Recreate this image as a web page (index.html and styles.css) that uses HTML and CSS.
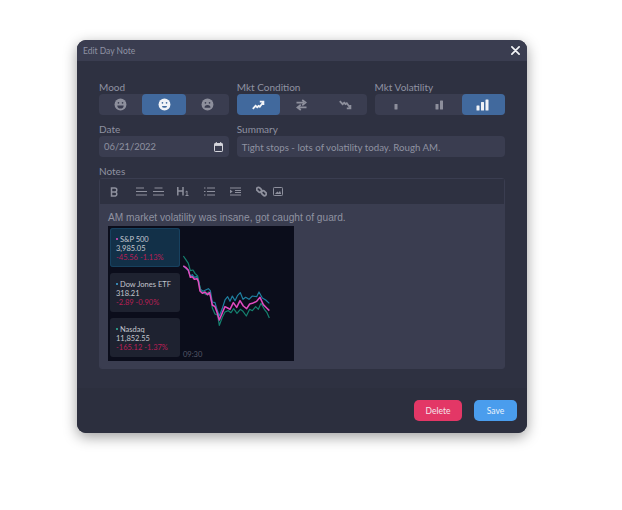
FILE: index.html
```html
<!DOCTYPE html>
<html lang="en">
<head>
<meta charset="utf-8">
<title>Edit Day Note</title>
<link rel="stylesheet" href="styles.css">
</head>
<body>
<svg class="defs" width="0" height="0" aria-hidden="true">
  <symbol id="face-happy" viewBox="0 0 14 14"><circle cx="7" cy="7" r="6.4" fill="currentColor"/><circle cx="4.8" cy="5.2" r=".9" class="cut"/><circle cx="9.2" cy="5.2" r=".9" class="cut"/><path d="M3.600 8h6.800a3.400 3.400 0 0 1-6.800 0z" class="cut"/></symbol>
  <symbol id="face-neutral" viewBox="0 0 14 14"><circle cx="7" cy="7" r="6.4" fill="currentColor"/><circle cx="4.8" cy="5.200" r=".9" class="cut"/><circle cx="9.200" cy="5.200" r=".9" class="cut"/><path d="M4.300 8.500h5.400a2.700 2 0 0 1-5.400 0z" class="cut"/></symbol>
  <symbol id="face-sad" viewBox="0 0 14 14"><circle cx="7" cy="7" r="6.4" fill="currentColor"/><circle cx="4.800" cy="5.200" r=".9" class="cut"/><circle cx="9.200" cy="5.200" r=".9" class="cut"/><path d="M3.800 10.600a3.200 3 0 0 1 6.400 0z" class="cut"/></symbol>
</svg>
<main class="modal">
  <header class="modal-head">
    <span class="modal-title">Edit Day Note</span>
    <svg class="close" viewBox="0 0 10 10" width="9" height="9"><path d="M1 1l8 8M9 1l-8 8" fill="none" stroke="currentColor" stroke-width="1.900" stroke-linecap="round"/></svg>
  </header>
  <section class="modal-body">
    <div class="row-three">
      <div class="field">
        <label class="label">Mood</label>
        <div class="segments">
          <button class="seg"><svg width="13" height="13"><use href="#face-happy"/></svg></button>
          <button class="seg active"><svg width="13" height="13"><use href="#face-neutral"/></svg></button>
          <button class="seg"><svg width="13" height="13"><use href="#face-sad"/></svg></button>
        </div>
      </div>
      <div class="field">
        <label class="label">Mkt Condition</label>
        <div class="segments">
          <button class="seg active"><svg width="13" height="10" viewBox="0 0 13 10"><path d="M.8 8.800l2.800-3 1.600 1.400 1.400-1.200 1.200.8 3-4M7.800 1.600h3.600v3.400" fill="none" stroke="currentColor" stroke-width="1.800"/></svg></button>
          <button class="seg"><svg width="11" height="12" viewBox="0 0 11 12"><path d="M.5 3.600h7.500M6.200 1l3.400 2.600-3.400 2.600M10.500 8.400H3M4.800 5.800L1.400 8.400l3.400 2.600" fill="none" stroke="currentColor" stroke-width="1.700"/></svg></button>
          <button class="seg"><svg width="13" height="10" viewBox="0 0 13 10"><path d="M.8 1.200l2.800 3 1.600-1.400 1.400 1.200 1.200-.8 3 4M7.800 8.400h3.600V5" fill="none" stroke="currentColor" stroke-width="1.800"/></svg></button>
        </div>
      </div>
      <div class="field">
        <label class="label">Mkt Volatility</label>
        <div class="segments">
          <button class="seg"><svg width="12" height="11" viewBox="0 0 12 11"><rect x="4.500" y="5" width="3" height="5.500" rx=".5" fill="currentColor"/></svg></button>
          <button class="seg"><svg width="12" height="11" viewBox="0 0 12 11"><rect x="1.500" y="5" width="3" height="5.500" rx=".5" fill="currentColor"/><rect x="6" y="1.500" width="3" height="9" rx=".5" fill="currentColor"/></svg></button>
          <button class="seg active"><svg width="14" height="12" viewBox="0 0 14 12"><rect x=".5" y="6.500" width="3" height="5" rx=".5" fill="currentColor"/><rect x="5" y="3" width="3" height="8.500" rx=".5" fill="currentColor"/><rect x="9.500" y=".5" width="3" height="11" rx=".5" fill="currentColor"/></svg></button>
        </div>
      </div>
    </div>
    <div class="row-three">
      <div class="field">
        <label class="label">Date</label>
        <div class="input date-input">
          <span>06/21/2022</span>
          <svg width="9" height="10" viewBox="0 0 9 10"><path d="M1.200 1.500h6.600a.7.7 0 0 1 .7.700v6.600a.7.7 0 0 1-.7.700H1.200a.7.7 0 0 1-.7-.7V2.200a.7.7 0 0 1 .7-.7z" fill="none" stroke="currentColor"/><rect x=".5" y="1.500" width="8" height="2.400" fill="currentColor"/><path d="M2.300 0v2M6.700 0v2" stroke="currentColor"/></svg>
        </div>
      </div>
      <div class="field span-two">
        <label class="label">Summary</label>
        <div class="input">Tight stops - lots of volatility today. Rough AM.</div>
      </div>
    </div>
    <div class="field">
      <label class="label">Notes</label>
      <div class="editor">
        <div class="toolbar">
          <span class="tool tool-b"><svg width="9" height="10" viewBox="0 0 9 10"><path d="M1.500 1h3.300a2 2 0 0 1 0 4H1.500zM1.500 5h3.900a2.100 2.100 0 0 1 0 4H1.500z" fill="none" stroke="currentColor" stroke-width="1.500"/></svg></span>
          <span class="tool tool-a1"><svg width="11" height="9" viewBox="0 0 11 9"><path d="M0 1h8M0 4.500h11M0 8h11" fill="none" stroke="currentColor"/></svg></span>
          <span class="tool tool-a2"><svg width="11" height="9" viewBox="0 0 11 9"><path d="M1.500 1h8M0 4.500h11M0 8h11" fill="none" stroke="currentColor"/></svg></span>
          <span class="tool tool-h"><svg width="12" height="9" viewBox="0 0 12 9"><path d="M.8 0v8.500M6 0v8.500M.8 4H6" fill="none" stroke="currentColor" stroke-width="1.500"/><path d="M8.500 5l1.500-1v4.500M8.500 8.500h3" fill="none" stroke="currentColor"/></svg></span>
          <span class="tool tool-l"><svg width="11" height="9" viewBox="0 0 11 9"><path d="M3 1h8M3 4.500h8M3 8h8" fill="none" stroke="currentColor"/><path d="M0 1h1.500M0 4.500h1.500M0 8h1.500" fill="none" stroke="currentColor"/></svg></span>
          <span class="tool tool-i"><svg width="11" height="9" viewBox="0 0 11 9"><path d="M0 1h11M5 3.500h6M5 5.500h6M0 8h11" fill="none" stroke="currentColor"/><path d="M0 2.500l2.600 2L0 6.500z" fill="currentColor"/></svg></span>
          <span class="tool tool-k"><svg width="11" height="11" viewBox="0 0 11 11"><g fill="none" stroke="currentColor" stroke-width="1.800"><rect x=".4" y="2" width="5.400" height="3.600" rx="1.800" transform="rotate(45 3.100 3.800)"/><rect x="5.200" y="5.400" width="5.400" height="3.600" rx="1.800" transform="rotate(45 7.900 7.200)"/></g></svg></span>
          <span class="tool tool-p"><svg width="10" height="9" viewBox="0 0 10 9"><rect x=".5" y=".5" width="9" height="8" rx=".8" fill="none" stroke="currentColor"/><path d="M2 7l2.300-2.600 1.400 1.300L7 3.800 8.200 7z" fill="currentColor"/></svg></span>
        </div>
        <div class="editor-body">
          <p class="note-text">AM market volatility was insane, got caught of guard.</p>
          <div class="shot">
            <div class="cards">
              <div class="card selected">
                <div class="card-name"><i class="dot pink"></i>S&amp;P 500</div>
                <div>3,985.05</div>
                <div class="neg">-45.56 -1.13%</div>
              </div>
              <div class="card">
                <div class="card-name"><i class="dot blue"></i>Dow Jones ETF</div>
                <div>318.21</div>
                <div class="neg">-2.89 -0.90%</div>
              </div>
              <div class="card">
                <div class="card-name"><i class="dot green"></i>Nasdaq</div>
                <div>11,852.55</div>
                <div class="neg">-165.12 -1.37%</div>
              </div>
            </div>
            <div class="plot">
              <svg class="plot-svg" viewBox="181 226 113 135" width="113" height="135">
                <g transform="translate(175 240) scale(.33333)" fill="none" stroke-width="3.600" stroke-linejoin="round">
                  <polyline stroke="#1f7fa0" points="25,78 32,84 40,92 46,108 52,104 58,112 65,110 70,118 76,148 84,154 92,150 100,146 106,152 112,186 120,188 125,205 133,228 142,205 150,180 158,170 165,184 172,168 180,182 188,166 196,158 204,178 212,172 222,178 232,168 245,170 252,156 262,174 272,180 283,190"/>
                  <polyline stroke="#15806f" points="25,48 32,58 40,70 46,92 54,90 60,100 68,108 72,130 78,152 86,158 94,164 100,156 108,172 112,204 120,222 128,226 133,256 142,232 150,216 160,212 168,218 176,206 186,220 196,208 204,214 214,228 224,208 232,212 242,200 250,208 258,190 268,208 276,218 283,234"/>
                  <polyline stroke="#e04cc0" stroke-width="4.600" points="25,78 32,82 40,90 46,112 52,110 58,118 66,116 70,124 75,153 82,160 90,156 98,164 104,158 112,195 120,200 125,214 133,240 142,218 150,200 158,204 165,208 175,188 185,202 195,182 205,198 215,206 224,192 232,190 245,184 255,172 265,194 275,204 283,212"/>
                </g>
              </svg>
              <span class="time">09:30</span>
            </div>
          </div>
        </div>
      </div>
    </div>
  </section>
  <footer class="modal-foot">
    <button class="btn btn-delete">Delete</button>
    <button class="btn btn-save">Save</button>
  </footer>
</main>
</body>
</html>
```
FILE: styles.css
```css
* { box-sizing: border-box; }
html, body { margin: 0; padding: 0; background: #fff; }
body { width: 622px; height: 510px; overflow: hidden; font-family: "Lato", "Liberation Sans", sans-serif; padding: 40px 0 0 77px; }
.defs { position: absolute; }
.cut { fill: var(--cut, #3a3d50); }

.modal { width: 450px; height: 393px; display: flex; flex-direction: column; background: #2e3141; border-radius: 9px; overflow: hidden; box-shadow: 0 4px 14px rgba(0, 0, 0, .38); }
.modal-head { height: 21px; flex: none; display: flex; align-items: center; justify-content: space-between; padding: 0 7px 0 6px; background: #3a3d50; }
.modal-title { font-size: 8.500px; color: #8f92a3; }
.close { color: #f2f3f6; }

.modal-body { flex: 1; padding: 20px 22px 0; display: flex; flex-direction: column; gap: 8px; background: #2e3141; }
.row-three { display: grid; grid-template-columns: repeat(3, 1fr); gap: 7.300px; }
.span-two { grid-column: span 2; }
.field { display: flex; flex-direction: column; min-width: 0; }
.label { font-size: 10px; line-height: 13px; color: #8f92a1; }

.segments { display: grid; grid-template-columns: repeat(3, 1fr); height: 21px; background: #3a3d50; border-radius: 4px; }
.seg { border: 0; padding: 0; display: flex; align-items: center; justify-content: center; background: transparent; color: #8d8f9c; border-radius: 4px; --cut: #3a3d50; }
.seg.active { background: #41699d; color: #f1f3f7; --cut: #41699d; }

.input { height: 21px; display: flex; align-items: center; justify-content: space-between; padding: 0 5px; background: #3a3d50; border-radius: 4px; font-size: 9.700px; color: #8f92a1; }
.date-input { font-size: 9.400px; }
.date-input svg { color: #d5d6dc; margin-right: 1px; }

.editor { height: 191px; border: 1px solid #3a3d50; border-radius: 3px; background: #3a3d50; display: flex; flex-direction: column; }
.toolbar { height: 25px; flex: none; display: flex; align-items: center; background: #2e3141; color: #8e909d; padding-left: 10px; }
.tool { display: flex; }
.tool-a1 { margin-left: 17px; }
.tool-a2 { margin-left: 6px; }
.tool-h { margin-left: 13px; }
.tool-l { margin-left: 15px; }
.tool-i { margin-left: 15px; }
.tool-k { margin-left: 15px; }
.tool-p { margin-left: 6px; }

.editor-body { flex: 1; padding: 8px 8px 0; }
.note-text { margin: 0; height: 14px; font-family: "Liberation Sans", Arial, sans-serif; font-size: 10.160px; line-height: 12px; color: #8f92a1; }
.shot { width: 186px; height: 135px; display: flex; background: #0b0d1b; }
.cards { width: 73px; flex: none; padding: 2px 0 0 2px; display: flex; flex-direction: column; gap: 6px; }
.card { height: 39px; width: 70px; padding: 6.500px 0 0 6px; border-radius: 3px; background: #1e2230; color: #c4c7cf; font-size: 7.500px; line-height: 9px; white-space: nowrap; }
.card.selected { background: #123048; box-shadow: inset 0 0 0 1px #17415f; }
.card-name { display: flex; align-items: center; }
.dot { width: 2px; height: 2px; margin-right: 2px; border-radius: 50%; }
.pink { background: #e04cc0; }
.blue { background: #3fa7dc; }
.green { background: #2fb89c; }
.neg { color: #b81f55; }
.plot { flex: 1; position: relative; }
.plot-svg { display: block; }
.time { position: absolute; left: 2px; bottom: 2px; font-size: 7.500px; line-height: 9px; color: #555868; }

.modal-foot { height: 45px; flex: none; display: flex; justify-content: flex-end; align-items: flex-start; gap: 12px; padding: 12px 10px 0 0; background: #2c2f3e; }
.btn { height: 21px; border: 0; border-radius: 5px; padding: 0; font-family: inherit; font-size: 8.500px; color: #f3e6ec; }
.btn-delete { width: 48px; background: #e33766; }
.btn-save { width: 43px; background: #4a9ded; color: #eaf3fc; }
```
